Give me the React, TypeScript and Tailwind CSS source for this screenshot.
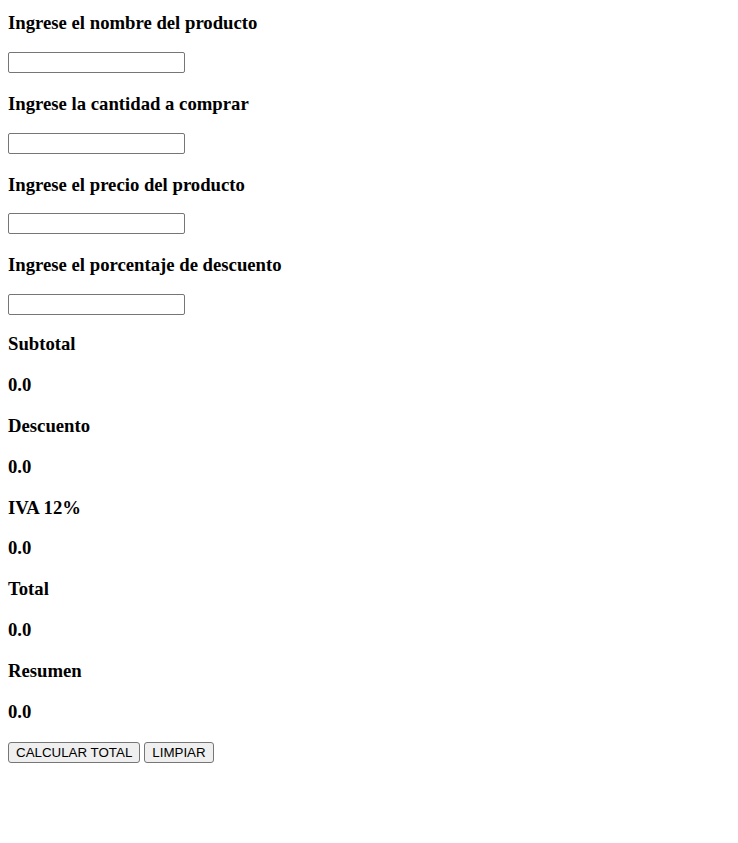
import React from "react";

const serif = { fontFamily: '"Liberation Serif", "Times New Roman", serif' };

function Heading({ children, className = "" }: { children: React.ReactNode; className?: string }) {
  return (
    <h3
      className={`m-0 text-[18.72px] leading-[22px] font-bold text-black ${className}`}
      style={serif}
    >
      {children}
    </h3>
  );
}

function Field({ label, first }: { label: string; first?: boolean }) {
  return (
    <>
      <Heading className={first ? "mt-[11.8px]" : "mt-[20px]"}>{label}</Heading>
      <input
        type="text"
        className={`${first ? "mt-[18.5px]" : "mt-[17.5px]"} w-[177px] h-[21px] border border-[#767676] rounded-[2px] bg-white px-[2px] text-[13.33px] outline-none`}
        style={{ fontFamily: '"Liberation Sans", Arial, sans-serif' }}
      />
    </>
  );
}

export default function App() {
  const results = ["Subtotal", "Descuento", "IVA 12%", "Total", "Resumen"];
  return (
    <div className="min-h-[843px] w-full bg-white px-2 flex flex-col items-start">
      <Field label="Ingrese el nombre del producto" first />
      <Field label="Ingrese la cantidad a comprar" />
      <Field label="Ingrese el precio del producto" />
      <Field label="Ingrese el porcentaje de descuento" />
      {results.map((r, i) => (
        <React.Fragment key={r}>
          <Heading className={i === 0 ? "mt-[18.2px]" : "mt-[18.9px]"}>{r}</Heading>
          <Heading className="mt-[18.9px]">0.0</Heading>
        </React.Fragment>
      ))}
      <div
        className="mt-[18.9px] flex gap-[4px]"
        style={{ fontFamily: '"Liberation Sans", Arial, sans-serif' }}
      >
        <button className="h-[21px] px-[7px] border border-[#767676] rounded-[3px] bg-[#efefef] text-[13.33px] text-black leading-none">
          CALCULAR TOTAL
        </button>
        <button className="h-[21px] px-[7px] border border-[#767676] rounded-[3px] bg-[#efefef] text-[13.33px] text-black leading-none">
          LIMPIAR
        </button>
      </div>
    </div>
  );
}
